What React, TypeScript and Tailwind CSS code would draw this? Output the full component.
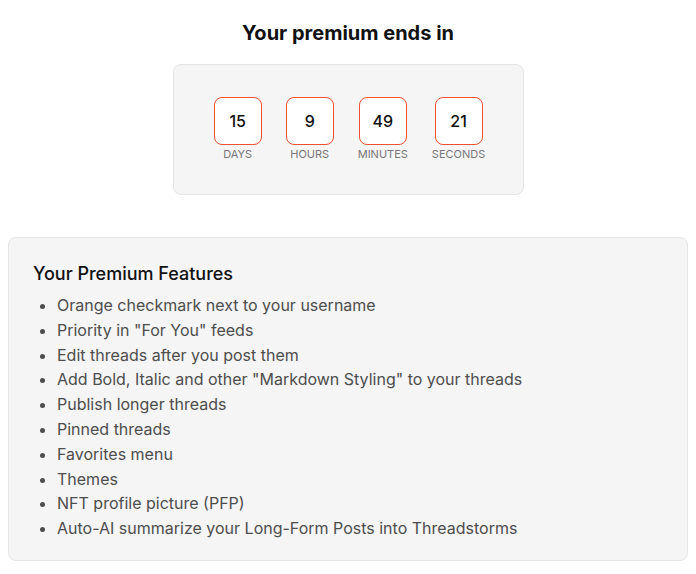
import React from "react"

const units = [
  { value: "15", label: "Days" },
  { value: "9", label: "Hours" },
  { value: "49", label: "Minutes" },
  { value: "21", label: "Seconds" },
]

const features = [
  "Orange checkmark next to your username",
  'Priority in "For You" feeds',
  "Edit threads after you post them",
  'Add Bold, Italic and other "Markdown Styling" to your threads',
  "Publish longer threads",
  "Pinned threads",
  "Favorites menu",
  "Themes",
  "NFT profile picture (PFP)",
  "Auto-AI summarize your Long-Form Posts into Threadstorms",
]

export default function App() {
  return (
    <div className="min-h-screen bg-white px-2 pt-[19px] font-['Inter',sans-serif] text-[#111]">
      {/* Countdown */}
      <div className="flex flex-col items-center">
        <h1 className="text-[20px] font-bold leading-7">Your premium ends in</h1>
        <div className="mt-[17px] flex w-[351px] justify-center gap-6 rounded-lg border border-[#e5e5e5] bg-[#f5f5f5] py-8 pl-[3px]">
          {units.map((u) => (
            <div key={u.label} className="flex flex-col items-center">
              <div className="flex h-12 w-12 items-center justify-center rounded-lg border border-[#f0502e] bg-white text-[16px] font-medium">
                {u.value}
              </div>
              <span className="mt-px text-[11px] uppercase leading-4 text-[#777]">{u.label}</span>
            </div>
          ))}
        </div>
      </div>

      {/* Features */}
      <div className="mt-[42px] rounded-lg border border-[#e5e5e5] bg-[#f5f5f5] px-6 pb-[19px] pt-[22px]">
        <h2 className="text-lg font-medium leading-7">Your Premium Features</h2>
        <ul className="mt-[5px] list-disc pl-6 text-base leading-[24.8px] text-[#4d4d4d]">
          {features.map((f) => (
            <li key={f}>{f}</li>
          ))}
        </ul>
      </div>
    </div>
  )
}
